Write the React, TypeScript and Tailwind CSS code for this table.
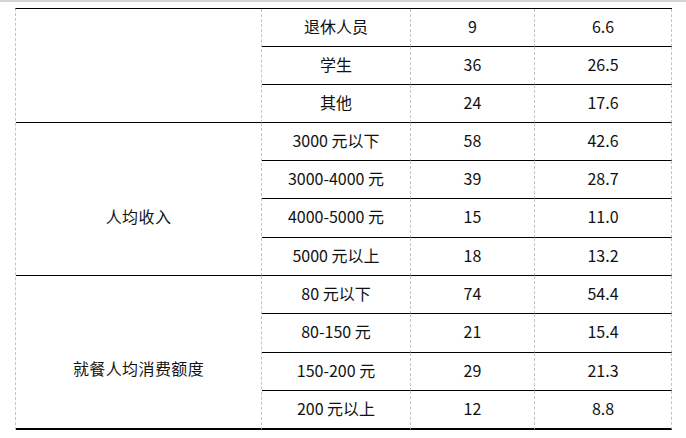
const groups = [
  {
    label: "",
    pad: "pt-0",
    rows: [
      ["退休人员", "9", "6.6"],
      ["学生", "36", "26.5"],
      ["其他", "24", "17.6"],
    ],
  },
  {
    label: "人均收入",
    pad: "pt-[34px]",
    rows: [
      ["3000 元以下", "58", "42.6"],
      ["3000-4000 元", "39", "28.7"],
      ["4000-5000 元", "15", "11.0"],
      ["5000 元以上", "18", "13.2"],
    ],
  },
  {
    label: "就餐人均消费额度",
    pad: "pt-[31px]",
    rows: [
      ["80 元以下", "74", "54.4"],
      ["80-150 元", "21", "15.4"],
      ["150-200 元", "29", "21.3"],
      ["200 元以上", "12", "8.8"],
    ],
  },
];

const spans = ["row-span-3", "row-span-4", "row-span-4"];

export default function App() {
  const total = groups.reduce((n, g) => n + g.rows.length, 0);
  let idx = 0;

  return (
    <div className="h-[438px] w-[686px] overflow-hidden bg-white font-['Noto_Sans_CJK_SC',sans-serif] text-[16px] text-[#111]">
      <div className="h-[2px] bg-[#d4d4d4]" />
      <div className="ml-[15px] mt-[6px] grid w-[657px] grid-cols-[246px_149px_124px_137px] grid-rows-[38px_38px_38px_38px_38px_39px_38px_38px_39px_38px_39px] border-l border-t border-l-[#c4c4c4] border-t-black [border-left-style:dashed]">
        {groups.map((g, gi) => {
          const lastGroup = gi === groups.length - 1;
          return [
            <div
              key={`g${gi}`}
              className={`col-start-1 flex items-center justify-center border-r border-dashed border-r-[#c4c4c4] border-b-black ${spans[gi]} ${g.pad} ${
                lastGroup ? "border-b-2 [border-bottom-style:solid]" : "border-b [border-bottom-style:solid]"
              }`}
            >
              <span className="tracking-[0.4px]">{g.label}</span>
            </div>,
            ...g.rows.map((r) => {
              idx += 1;
              const last = idx === total;
              const bottom = last
                ? "border-b-2 [border-bottom-style:solid]"
                : "border-b [border-bottom-style:solid]";
              return r.map((c, ci) => (
                <div
                  key={`${idx}-${ci}`}
                  className={`flex items-center justify-center pb-[4px] border-r border-dashed border-r-[#c4c4c4] border-b-black ${bottom}`}
                >
                  {c}
                </div>
              ));
            }),
          ];
        })}
      </div>
    </div>
  );
}
